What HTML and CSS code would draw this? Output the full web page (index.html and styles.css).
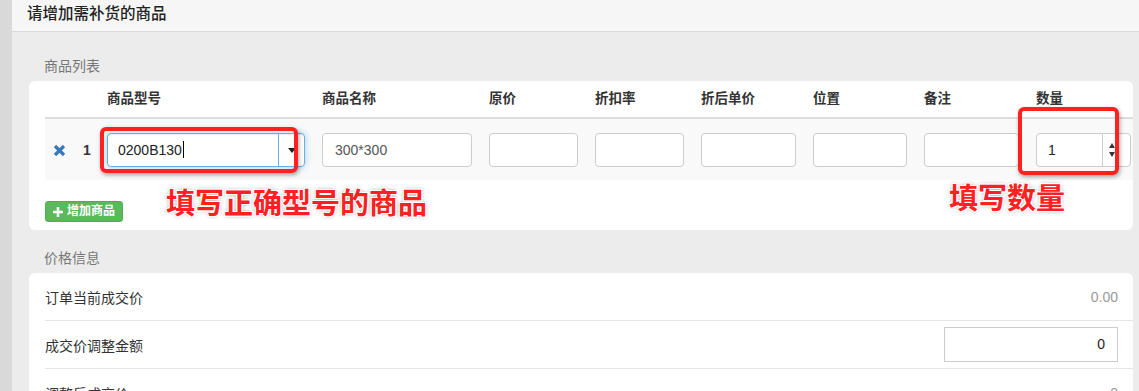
FILE: index.html
```html
<!DOCTYPE html>
<html lang="zh-CN">
<head>
<meta charset="utf-8">
<title>请增加需补货的商品</title>
<link rel="stylesheet" href="styles.css">
</head>
<body>
<div class="page">
  <div class="strip"></div>
  <div class="main">
    <div class="topbar">请增加需补货的商品</div>
    <div class="content">
      <div class="sec-label sec-first">商品列表</div>
      <div class="card goods">
        <div class="grid head">
          <span></span><span></span>
          <span>商品型号</span>
          <span>商品名称</span>
          <span>原价</span>
          <span>折扣率</span>
          <span>折后单价</span>
          <span>位置</span>
          <span>备注</span>
          <span>数量</span>
        </div>
        <div class="grid row">
          <svg class="icon-remove" width="13" height="13" viewBox="0 0 13 13"><path d="M2 2 L11 11 M11 2 L2 11" stroke="#3a78b8" stroke-width="3.2" stroke-linecap="butt"/></svg>
          <span class="idx">1</span>
          <div class="combo"><span class="combo-val">0200B130<i class="text-caret"></i></span><span class="combo-btn"><i class="tri-down"></i></span></div>
          <div class="field"><span>300*300</span></div>
          <div class="field"></div>
          <div class="field"></div>
          <div class="field"></div>
          <div class="field"></div>
          <div class="field"></div>
          <div class="field spin"><span class="spin-val">1</span><span class="spin-btn"><i class="tri-up-s"></i><i class="tri-down-s"></i></span></div>
        </div>
        <div class="actions">
          <button class="btn-add"><svg width="10" height="10" viewBox="0 0 10 10"><path d="M5 0 V10 M0 5 H10" stroke="#fff" stroke-width="2.6"/></svg>增加商品</button>
        </div>
        <div class="mark mark-model"></div>
        <div class="mark mark-qty"></div>
        <div class="note note-model">填写正确型号的商品</div>
        <div class="note note-qty">填写数量</div>
      </div>

      <div class="sec-label">价格信息</div>
      <div class="card price">
        <div class="price-row"><span>订单当前成交价</span><span class="muted">0.00</span></div>
        <div class="price-row"><span>成交价调整金额</span><span class="price-input">0</span></div>
        <div class="price-row"><span>调整后成交价</span><span class="muted">0</span></div>
      </div>
    </div>
  </div>
</div>
</body>
</html>
```

FILE: styles.css
```css
* { box-sizing: border-box; }
html, body { margin: 0; padding: 0; }
body {
  font-family: "Liberation Sans", "Noto Sans CJK SC", sans-serif;
  color: #333;
  background: #ececec;
  width: 1139px;
  height: 391px;
  overflow: hidden;
}
.page { display: flex; height: 391px; }
.strip {
  width: 12px;
  flex: none;
  background: #d9d9d9;
}
.main { flex: 1; min-width: 0; background: #ececec; }
.topbar {
  height: 32px;
  background: #f6f6f6;
  border-bottom: 1px solid #dadada;
  padding-left: 15px;
  font-size: 15.5px;
  line-height: 28px;
  color: #222;
  font-weight: 500;
}
.content { padding: 0 6px 0 17px; }
.sec-label {
  padding: 0 15px 5px;
  font-size: 14px;
  line-height: 20px;
  color: #777;
}
.sec-first { margin-top: 24px; }
.card {
  background: #fff;
  border-radius: 6px;
  position: relative;
}
.goods {
  padding: 0 0 8px 16px;
  margin-bottom: 18px;
}
.grid {
  display: grid;
  grid-template-columns: 13px 7px 198px 150px 89px 89px 95px 94px 95px 95px;
  column-gap: 17px;
  align-items: center;
  padding-left: 8px;
}
.head {
  height: 38px;
  border-bottom: 2px solid #dddddd;
  font-size: 13.5px;
  font-weight: bold;
  color: #333;
  line-height: 20px;
}
.row {
  background: #f9f9f9;
  padding-top: 14px;
  padding-bottom: 13px;
}
.icon-remove { display: block; }
.idx { font-size: 14px; font-weight: bold; color: #333; }
.combo {
  height: 34px;
  border: 1px solid #66afe9;
  border-radius: 4px;
  box-shadow: inset 0 1px 1px rgba(0,0,0,.075), 0 0 7px rgba(102,175,233,.6);
  display: flex;
  background: #fff;
}
.combo-val {
  flex: 1;
  padding-left: 10px;
  font-size: 14px;
  line-height: 32px;
  color: #222;
}
.text-caret {
  display: inline-block;
  width: 1px;
  height: 17px;
  background: #000;
  vertical-align: -3px;
  margin-left: 1px;
}
.combo-btn {
  width: 26px;
  border-left: 1px solid #66afe9;
  display: flex;
  align-items: center;
  justify-content: center;
}
.tri-down {
  width: 0; height: 0;
  border-left: 4px solid transparent;
  border-right: 4px solid transparent;
  border-top: 5px solid #222;
}
.field {
  height: 34px;
  border: 1px solid #ccc;
  border-radius: 4px;
  background: #fff;
  padding-left: 12px;
  font-size: 14px;
  line-height: 32px;
  color: #555;
}
.spin { display: flex; padding-left: 0; color: #222; }
.spin-val { flex: 1; padding-left: 11px; }
.spin-btn {
  width: 28px;
  border-left: 1px solid #ccc;
  display: flex;
  flex-direction: column;
  align-items: flex-start;
  justify-content: center;
  padding-left: 6px;
  gap: 4px;
}
.tri-up-s, .tri-down-s {
  width: 0; height: 0;
  border-left: 3.5px solid transparent;
  border-right: 3.5px solid transparent;
}
.tri-up-s { border-bottom: 5px solid #333; }
.tri-down-s { border-top: 5px solid #333; }
.actions { padding-top: 21px; }
.btn-add {
  display: inline-flex;
  align-items: center;
  gap: 4px;
  height: 21px;
  padding: 0 7px 0 7px;
  border: 1px solid #4cae4c;
  border-radius: 3px;
  background: #5cb85c;
  color: #fff;
  font-family: "Liberation Sans", "Noto Sans CJK SC", sans-serif;
  font-size: 12px;
  font-weight: bold;
  line-height: 19px;
}
.mark {
  position: absolute;
  border: 4px solid #ff2020;
  border-radius: 6px;
  box-shadow: 1px 2px 4px rgba(0,0,0,.35);
}
.mark-model { left: 71px; top: 46px; width: 198px; height: 46px; }
.mark-qty { left: 989px; top: 26px; width: 101px; height: 68px; }
.note {
  position: absolute;
  font-size: 29px;
  font-weight: bold;
  line-height: 30px;
  color: #ff2121;
  white-space: nowrap;
  text-shadow: 1px 0 0 #fff, -1px 0 0 #fff, 0 1px 0 #fff, 0 -1px 0 #fff,
    1px 1px 0 #fff, -1px -1px 0 #fff, 1px -1px 0 #fff, -1px 1px 0 #fff,
    0 0 4px rgba(0,0,0,.45);
}
.note-model { left: 137px; top: 108px; }
.note-qty { left: 920px; top: 103px; }
.price { padding-left: 16px; }
.price-row {
  height: 48px;
  border-bottom: 1px solid #e5e5e5;
  display: flex;
  align-items: center;
  justify-content: space-between;
  padding-right: 15px;
  font-size: 14px;
  color: #333;
}
.muted { color: #999; }
.price-input {
  width: 174px;
  height: 35px;
  border: 1px solid #ccc;
  text-align: right;
  padding-right: 12px;
  line-height: 33px;
  color: #222;
}
```
